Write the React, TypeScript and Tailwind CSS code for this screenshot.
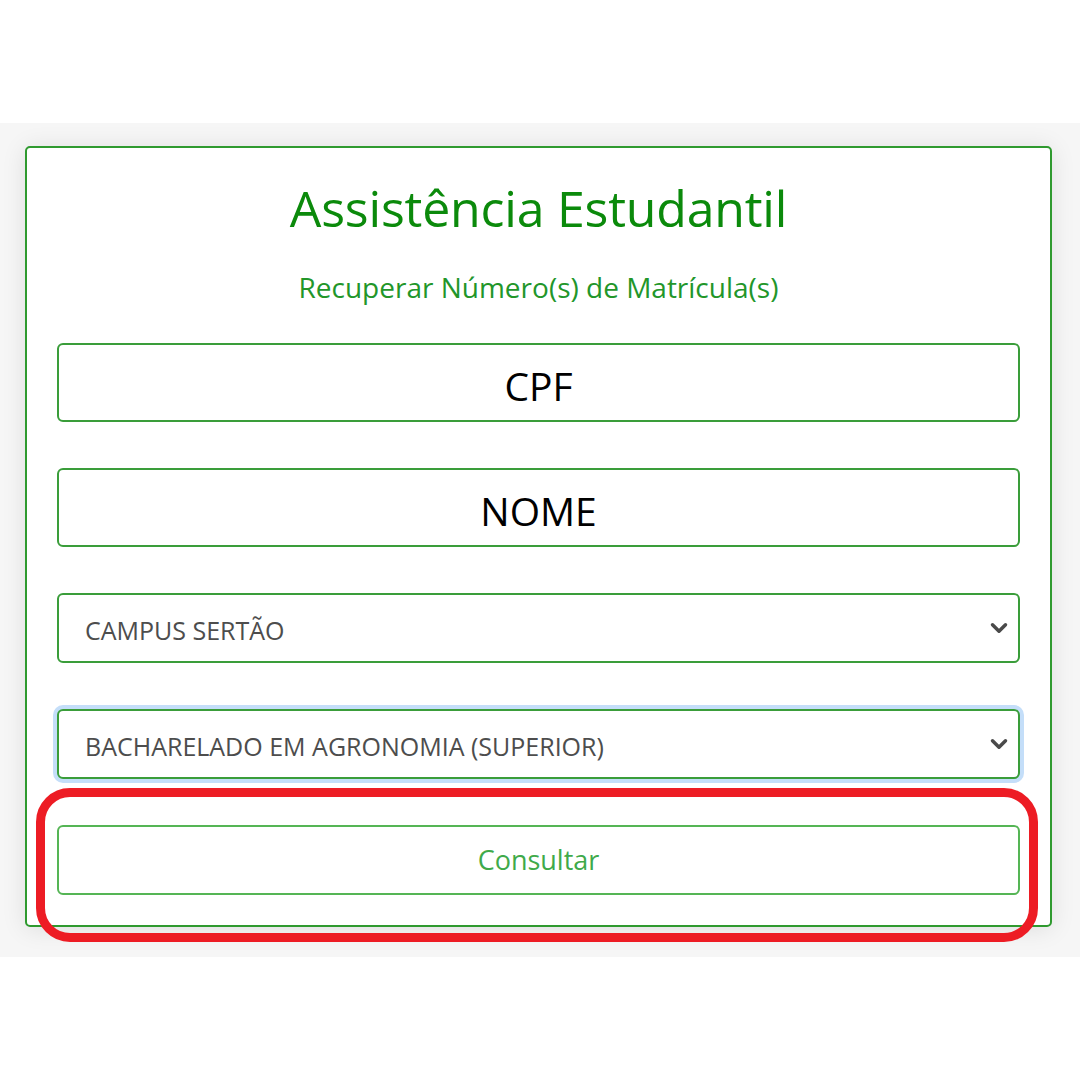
import { ChevronDown } from 'lucide-react';

const font = { fontFamily: '"Open Sans", "Noto Sans", sans-serif' };

const Field = ({ label }: { label: string }) => (
  <div className="h-[79px] w-full rounded-[6px] border-2 border-[#3a9d3a] bg-white flex items-center justify-center">
    <span className="text-[39px] text-black leading-none pt-[6px]">{label}</span>
  </div>
);

const Select = ({ value, focused }: { value: string; focused?: boolean }) => (
  <div
    className={
      'h-[70px] w-full rounded-[6px] border-2 border-[#3a9d3a] bg-white flex items-center pl-[26px] pr-[6px] ' +
      (focused ? 'ring-4 ring-[#c4def9]' : '')
    }
  >
    <span className="flex-1 text-[25px] text-[#4d4d4d] pt-[6px]">{value}</span>
    <ChevronDown className="w-[26px] h-[26px] text-[#4a4a4a]" strokeWidth={3.2} />
  </div>
);

export default function App() {
  return (
    <div className="relative w-[1080px] h-[1080px] bg-white overflow-hidden" style={font}>
      <div className="mt-[123px] h-[834px] bg-[#f6f6f6] pt-[23px] pl-[25px]">
        <div className="w-[1027px] h-[781px] rounded-[5px] border-2 border-[#2f9a2f] bg-white shadow-[0_2px_24px_rgba(0,0,0,0.10)] px-[30px] flex flex-col">
          <h1 className="mt-[30px] text-center text-[50px] leading-[60px] text-[#0b8a0b] tracking-[-0.2px]">
            Assistência Estudantil
          </h1>
          <p className="mt-[31px] text-center text-[28px] leading-[36px] text-[#22962a]">
            Recuperar Número(s) de Matrícula(s)
          </p>
          <div className="mt-[38px] flex flex-col gap-[46px]">
            <Field label="CPF" />
            <Field label="NOME" />
            <Select value="CAMPUS SERTÃO" />
            <Select value="BACHARELADO EM AGRONOMIA (SUPERIOR)" focused />
            <button className="h-[70px] w-full rounded-[6px] border-2 border-[#55b555] bg-white text-[27px] text-[#3faa4a]">
              Consultar
            </button>
          </div>
        </div>
      </div>
      <div className="absolute left-[36px] top-[788px] w-[1002px] h-[154px] rounded-[34px] border-[9px] border-[#ed1c24]" />
    </div>
  );
}
